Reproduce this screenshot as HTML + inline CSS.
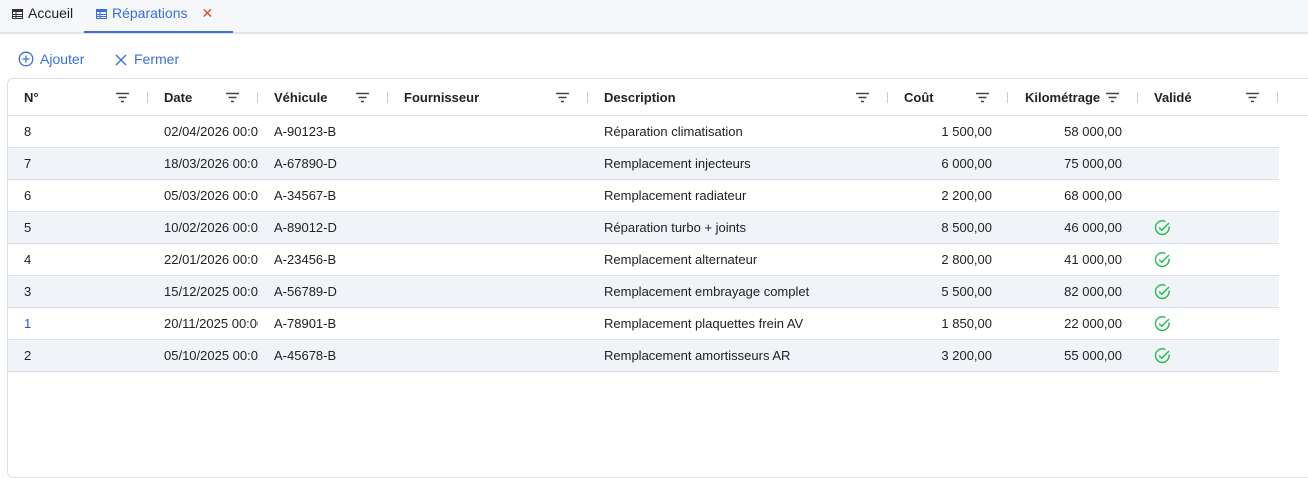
<!DOCTYPE html>
<html><head><meta charset="utf-8"><style>
*{box-sizing:border-box;margin:0;padding:0}
body{width:1308px;height:431px;overflow:hidden;background:#fff;font-family:"Liberation Sans",Arial,sans-serif;color:#222;position:relative}
.tabs{position:absolute;left:0;top:0;width:1308px;height:34px;background:#f6f7f9;border-bottom:2px solid #e3e5e8}
.tab{position:absolute;top:0;height:32px;line-height:26px;font-size:14px}
.tab svg{vertical-align:-1px;margin-right:5px}
.t1{left:12px;color:#222}
.t2{left:84px;width:149px;padding-left:12px;color:#3b6fe0;border-bottom:2px solid #3b6fe0;height:33px}
.t2 .x{color:#e0443e;margin-left:14px;font-size:14px}
.tb{position:absolute;top:50px;font-size:14px;color:#3b6fe0;line-height:18px}
.tb svg{vertical-align:-3px;margin-right:6px}
.grid{position:absolute;left:7px;top:78px;width:1320px;height:400px;border:1px solid #dcdfe3;border-radius:6px}
.row{position:absolute;left:0;height:32px;width:1271px;border-bottom:1px solid #dcdfe3;font-size:13px;line-height:31px}
.row.alt{background:#f0f3f8}
.hdr{top:0;height:37px;line-height:37px;font-weight:bold;width:1300px;border-bottom:1px solid #dcdfe3;background:#fff;border-radius:6px 0 0 0}
.c{position:absolute;top:0;white-space:nowrap;overflow:hidden;padding-left:16px}
.r{text-align:right;padding-left:0;padding-right:16px}
.f{position:absolute;top:13px}
.s{position:absolute;top:13px;width:1px;height:11px;background:#ccc}
</style></head><body>
<div class="tabs">
<div class="tab t1"><svg width="11" height="10" viewBox="0 0 11 10"><rect x="0.5" y="0.5" width="10" height="9" fill="none" stroke="#333"/><rect x="0" y="0" width="11" height="3" fill="#333"/><path d="M1 5.5h9M1 7.5h9M4 3v7" stroke="#333"/></svg>Accueil</div>
<div class="tab t2"><svg width="11" height="10" viewBox="0 0 11 10"><rect x="0.5" y="0.5" width="10" height="9" fill="none" stroke="#3b6fe0"/><rect x="0" y="0" width="11" height="3" fill="#3b6fe0"/><path d="M1 5.5h9M1 7.5h9M4 3v7" stroke="#3b6fe0"/></svg>Réparations<span class="x">✕</span></div>
</div>
<div class="tb" style="left:18px"><svg width="16" height="16" viewBox="0 0 16 16"><circle cx="8" cy="8" r="6.8" fill="none" stroke="#3b6fe0" stroke-width="1.3"/><path d="M8 4.5v7M4.5 8h7" stroke="#3b6fe0" stroke-width="1.3"/></svg>Ajouter</div>
<div class="tb" style="left:114px"><svg width="14" height="14" viewBox="0 0 14 14"><path d="M2 2l10 10M12 2L2 12" stroke="#3b6fe0" stroke-width="1.4"/></svg>Fermer</div>
<div class="grid">
<div class="row hdr">
<div class="c" style="left:0;width:140px">N°</div>
<div class="c" style="left:140px;width:110px">Date</div>
<div class="c" style="left:250px;width:130px">Véhicule</div>
<div class="c" style="left:380px;width:200px">Fournisseur</div>
<div class="c" style="left:580px;width:300px">Description</div>
<div class="c" style="left:880px;width:120px">Coût</div>
<div class="c" style="left:1000px;width:130px;padding-left:17px">Kilométrage</div>
<div class="c" style="left:1130px;width:140px">Validé</div>
</div>
</div>
<script>
var g=document.querySelector('.grid'),h=g.querySelector('.hdr');
[116,226,356,556,856,976,1106,1246].forEach(function(x){h.insertAdjacentHTML('beforeend','<svg class="f" style="left:'+(x-8)+'px" width="13" height="11" viewBox="0 0 13 11"><path d="M0 1.5h13M2.5 5.5h8M5 9.5h3" stroke="#444" stroke-width="1.6"/></svg>')});
[139,249,379,579,879,999,1129,1269].forEach(function(x){h.insertAdjacentHTML('beforeend','<div class="s" style="left:'+x+'px"></div>')});
var d=[["8","02/04/2026 00:00","A-90123-B","Réparation climatisation","1 500,00","58 000,00",0],
["7","18/03/2026 00:00","A-67890-D","Remplacement injecteurs","6 000,00","75 000,00",0],
["6","05/03/2026 00:00","A-34567-B","Remplacement radiateur","2 200,00","68 000,00",0],
["5","10/02/2026 00:00","A-89012-D","Réparation turbo + joints","8 500,00","46 000,00",1],
["4","22/01/2026 00:00","A-23456-B","Remplacement alternateur","2 800,00","41 000,00",1],
["3","15/12/2025 00:00","A-56789-D","Remplacement embrayage complet","5 500,00","82 000,00",1],
["1","20/11/2025 00:00","A-78901-B","Remplacement plaquettes frein AV","1 850,00","22 000,00",1],
["2","05/10/2025 00:00","A-45678-B","Remplacement amortisseurs AR","3 200,00","55 000,00",1]];
var ck='<svg width="17" height="17" viewBox="0 0 17 17" style="position:absolute;left:16px;top:7px"><path d="M15 7.5A6.8 6.8 0 1 1 11.5 2.6" fill="none" stroke="#2fbf5a" stroke-width="1.5"/><path d="M5 8.5l2.8 2.8L15 4" fill="none" stroke="#2fbf5a" stroke-width="1.5"/></svg>';
d.forEach(function(r,i){
var top=37+i*32;
g.insertAdjacentHTML('beforeend','<div class="row'+(i%2?' alt':'')+'" style="top:'+top+'px">'+
'<div class="c" style="left:0;width:140px;'+(r[0]=="1"?'color:#1a5fb4':'')+'">'+r[0]+'</div>'+
'<div class="c" style="left:140px;width:110px">'+r[1]+'</div>'+
'<div class="c" style="left:250px;width:130px">'+r[2]+'</div>'+
'<div class="c" style="left:580px;width:300px">'+r[3]+'</div>'+
'<div class="c r" style="left:880px;width:120px">'+r[4]+'</div>'+
'<div class="c r" style="left:1000px;width:130px">'+r[5]+'</div>'+
'<div class="c" style="left:1130px;width:140px;height:31px">'+(r[6]?ck:'')+'</div></div>');
});
</script>
</body></html>
